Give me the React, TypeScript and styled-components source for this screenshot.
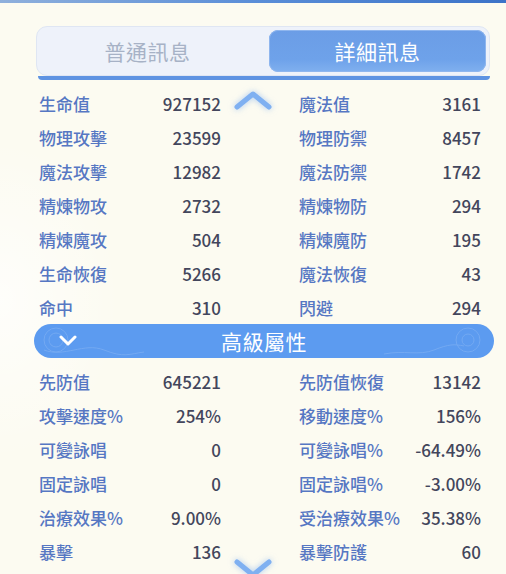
import React from "react";
import styled, { createGlobalStyle } from "styled-components";

const Global = createGlobalStyle`
  html, body { margin: 0; padding: 0; }
  body {
    width: 506px; height: 574px; overflow: hidden;
    background: #fcfbf1;
    font-family: "Noto Sans CJK TC", "Noto Sans", sans-serif;
  }
`;

const Page = styled.div`
  position: relative;
  width: 506px;
  height: 574px;
  overflow: hidden;
  background: radial-gradient(ellipse 120px 160px at 0px 300px, rgba(255,255,255,0.7), rgba(255,255,255,0)) , #fcfbf1;
`;

const TopLine = styled.div`
  height: 3px;
  background: linear-gradient(90deg, #8fb0dc, #5a8ed8 50%, #3c73c8);
`;

const Tabs = styled.div`
  margin: 23px 16px 0 36px;
  height: 50px;
  box-sizing: border-box;
  border: 1px solid #dfe6f3;
  border-radius: 11px;
  background: #eef2fa;
  display: grid;
  grid-template-columns: 1fr 217px;
  padding: 3px;
`;

const Tab = styled.div<{ $active?: boolean }>`
  display: flex;
  align-items: center;
  justify-content: center;
  border-radius: 9px;
  font-size: 21px;
  font-weight: 400;
  letter-spacing: 0.5px;
  padding-right: ${(p) => (p.$active ? "0" : "14px")};
  color: ${(p) => (p.$active ? "#ffffff" : "#a7b2c6")};
  background: ${(p) => (p.$active ? "linear-gradient(180deg, #6b9de6, #6ea2ea 70%, #80b0ef)" : "transparent")};
  box-shadow: ${(p) => (p.$active ? "inset 0 0 0 1px #8fb6ee" : "none")};
`;

const Strip = styled.div`
  margin: 0 16px 0 38px;
  height: 4px;
  background: #5e93e2;
  border-radius: 0 0 6px 6px;
`;

const Panel = styled.div`
  position: relative;
  padding-top: 6px;
`;

const Grid = styled.div`
  display: grid;
  grid-template-columns: 182px 182px;
  column-gap: 78px;
  padding-left: 39px;
`;

const Row = styled.div`
  height: 34px;
  display: flex;
  align-items: center;
  justify-content: space-between;
  font-size: 17px;
  font-weight: 500;
`;

const Label = styled.span`
  color: #5677c3;
  white-space: nowrap;
`;

const Value = styled.span`
  color: #43465c;
  white-space: nowrap;
`;

const SectionBar = styled.div`
  position: relative;
  margin: 0 12px 6px 34px;
  height: 34px;
  border-radius: 17px;
  background: #5c9bf0;
  display: flex;
  align-items: center;
  justify-content: center;
  color: #fff;
  font-size: 21px;
  font-weight: 400;
  letter-spacing: 0.5px;
  overflow: hidden;
`;

const BarChevron = styled.svg`
  position: absolute;
  left: 25px;
  top: 11px;
`;

const Swirl = styled.svg<{ $right?: boolean }>`
  position: absolute;
  top: 0;
  ${(p) => (p.$right ? "right: 0;" : "left: 0;")}
  opacity: 0.14;
`;

const ScrollHint = styled.svg<{ $top: number }>`
  position: absolute;
  left: 233px;
  top: ${(p) => p.$top}px;
  filter: drop-shadow(0 0 3px rgba(120, 170, 240, 0.6));
`;

const basic: [string, string, string, string][] = [
  ["生命值", "927152", "魔法值", "3161"],
  ["物理攻擊", "23599", "物理防禦", "8457"],
  ["魔法攻擊", "12982", "魔法防禦", "1742"],
  ["精煉物攻", "2732", "精煉物防", "294"],
  ["精煉魔攻", "504", "精煉魔防", "195"],
  ["生命恢復", "5266", "魔法恢復", "43"],
  ["命中", "310", "閃避", "294"],
];

const advanced: [string, string, string, string][] = [
  ["先防值", "645221", "先防值恢復", "13142"],
  ["攻擊速度%", "254%", "移動速度%", "156%"],
  ["可變詠唱", "0", "可變詠唱%", "-64.49%"],
  ["固定詠唱", "0", "固定詠唱%", "-3.00%"],
  ["治療效果%", "9.00%", "受治療效果%", "35.38%"],
  ["暴擊", "136", "暴擊防護", "60"],
];

function Rows({ data }: { data: [string, string, string, string][] }) {
  return (
    <Grid>
      {data.map(([a, b, c, d]) => (
        <React.Fragment key={a + c}>
          <Row>
            <Label>{a}</Label>
            <Value>{b}</Value>
          </Row>
          <Row>
            <Label>{c}</Label>
            <Value>{d}</Value>
          </Row>
        </React.Fragment>
      ))}
    </Grid>
  );
}

export default function App() {
  return (
    <>
      <Global />
      <Page>
        <TopLine />
        <Tabs>
          <Tab>普通訊息</Tab>
          <Tab $active>詳細訊息</Tab>
        </Tabs>
        <Strip />
        <Panel>
          <Rows data={basic} />
          <SectionBar>
            <Swirl width="120" height="34" viewBox="0 0 120 34">
              <g fill="none" stroke="#ffffff" strokeWidth="1">
                <circle cx="22" cy="16" r="12" />
                <circle cx="22" cy="16" r="7" />
                <path d="M10 26 C30 34 50 18 70 26 S95 30 110 28" />
              </g>
            </Swirl>
            <Swirl $right width="120" height="34" viewBox="0 0 120 34">
              <g fill="none" stroke="#ffffff" strokeWidth="1">
                <circle cx="94" cy="16" r="12" />
                <circle cx="94" cy="16" r="6" />
                <path d="M10 30 C30 26 45 32 60 26 S80 20 90 22" />
              </g>
            </Swirl>
            <BarChevron width="18" height="11" viewBox="0 0 18 11">
              <path d="M2 2 L9 9 L16 2" fill="none" stroke="#ffffff" strokeWidth="3" strokeLinecap="round" strokeLinejoin="round" />
            </BarChevron>
            高級屬性
          </SectionBar>
          <Rows data={advanced} />
          <ScrollHint $top={9} width="40" height="22" viewBox="0 0 40 22">
            <path d="M4 18 L20 5 L36 18" fill="none" stroke="#7fb0f1" strokeWidth="5" strokeLinecap="round" strokeLinejoin="round" />
          </ScrollHint>
          <ScrollHint $top={478} width="40" height="22" viewBox="0 0 40 22">
            <path d="M4 4 L20 17 L36 4" fill="none" stroke="#7fb0f1" strokeWidth="5" strokeLinecap="round" strokeLinejoin="round" />
          </ScrollHint>
        </Panel>
      </Page>
    </>
  );
}
